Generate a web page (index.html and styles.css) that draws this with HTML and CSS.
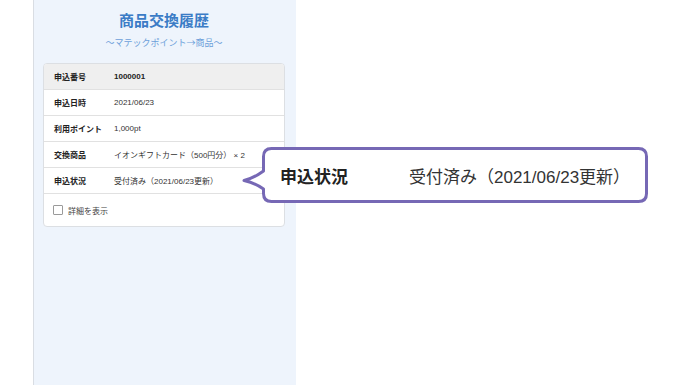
FILE: index.html
```html
<!DOCTYPE html>
<html lang="ja">
<head>
    <meta charset="UTF-8">
    <meta name="viewport" content="width=device-width, initial-scale=1.0">
    <title>商品交換履歴</title>
    <link rel="stylesheet" href="styles.css">
</head>
<body>
    <div class="page">
        <div class="panel">
            <h1 class="title">商品交換履歴</h1>
            <p class="subtitle">～マテックポイント→商品～</p>

            <div class="card">
                <div class="row row-head">
                    <span class="label">申込番号</span>
                    <span class="value bold">1000001</span>
                </div>
                <div class="row">
                    <span class="label">申込日時</span>
                    <span class="value">2021/06/23</span>
                </div>
                <div class="row">
                    <span class="label">利用ポイント</span>
                    <span class="value">1,000pt</span>
                </div>
                <div class="row">
                    <span class="label">交換商品</span>
                    <span class="value">イオンギフトカード（500円分）&nbsp;×&nbsp;2</span>
                </div>
                <div class="row">
                    <span class="label">申込状況</span>
                    <span class="value">受付済み（2021/06/23更新）</span>
                </div>
                <label class="detail">
                    <span class="checkbox"></span>
                    <span>詳細を表示</span>
                </label>
            </div>
        </div>
    </div>

    <!-- zoomed callout over the status row -->
    <div class="callout">
        <svg class="callout-frame" width="412" height="62" viewBox="0 0 412 62">
            <path d="M31.5 4.5 H398.5 Q406.5 4.5 406.5 12.5 V49.5 Q406.5 57.5 398.5 57.5 H31.5 Q23.5 57.5 23.5 49.5 V45 Q14 38.5 4 36.5 Q14 34 23.5 27 V12.5 Q23.5 4.5 31.5 4.5 Z" fill="#fff" stroke="#7668b5" stroke-width="3" stroke-linejoin="round"></path>
        </svg>
        <div class="callout-body">
            <span class="callout-label">申込状況</span>
            <span class="callout-value">受付済み（2021/06/23更新）</span>
        </div>
    </div>
</body>
</html>
```

FILE: styles.css
```css
body {
    margin: 0;
    height: 385px;
    overflow: hidden;
    background-color: #fff;
    font-family: "Liberation Sans", Arial, "Noto Sans CJK JP", sans-serif;
    color: #222;
}
.page {
    display: flex;
    height: 100%;
    padding-left: 33px;
}
.panel {
    width: 263px;
    height: 100%;
    box-sizing: border-box;
    padding: 11px 11px 0 9px;
    background-color: #eef4fc;
    border-left: 1px solid #d9dde3;
}
.title {
    margin: 0;
    font-size: 15px;
    line-height: 20px;
    font-weight: bold;
    text-align: center;
    color: #3b7cc6;
}
.subtitle {
    margin: 5px 0 0;
    font-family: "Noto Sans CJK JP", sans-serif;
    font-size: 9px;
    line-height: 14px;
    text-align: center;
    color: #6c9fda;
}
.card {
    margin-top: 13px;
    background-color: #fff;
    border: 1px solid #dcdfe3;
    border-radius: 4px;
    overflow: hidden;
}
.row {
    display: flex;
    align-items: center;
    height: 25px;
    padding-left: 10px;
    border-bottom: 1px solid #e1e1e1;
    font-size: 8px;
}
.row-head {
    background-color: #efefef;
}
.label {
    width: 60px;
    font-weight: bold;
    color: #222;
}
.value {
    color: #333;
}
.bold {
    font-weight: bold;
    color: #222;
}
.detail {
    display: flex;
    align-items: center;
    height: 32px;
    padding-left: 9px;
    font-size: 8px;
    color: #444;
}
.checkbox {
    width: 8px;
    height: 8px;
    margin-right: 5px;
    border: 1px solid #9a9a9a;
    border-radius: 1px;
    background-color: #fff;
}
.callout {
    position: absolute;
    left: 240px;
    top: 144px;
    width: 412px;
    height: 62px;
}
.callout-frame {
    position: absolute;
    left: 0;
    top: 0;
}
.callout-body {
    position: relative;
    display: flex;
    align-items: center;
    height: 100%;
    padding-left: 40px;
    font-size: 17px;
    color: #222;
}
.callout-label {
    width: 129px;
    font-weight: bold;
}
.callout-value {
    color: #333;
}
```
